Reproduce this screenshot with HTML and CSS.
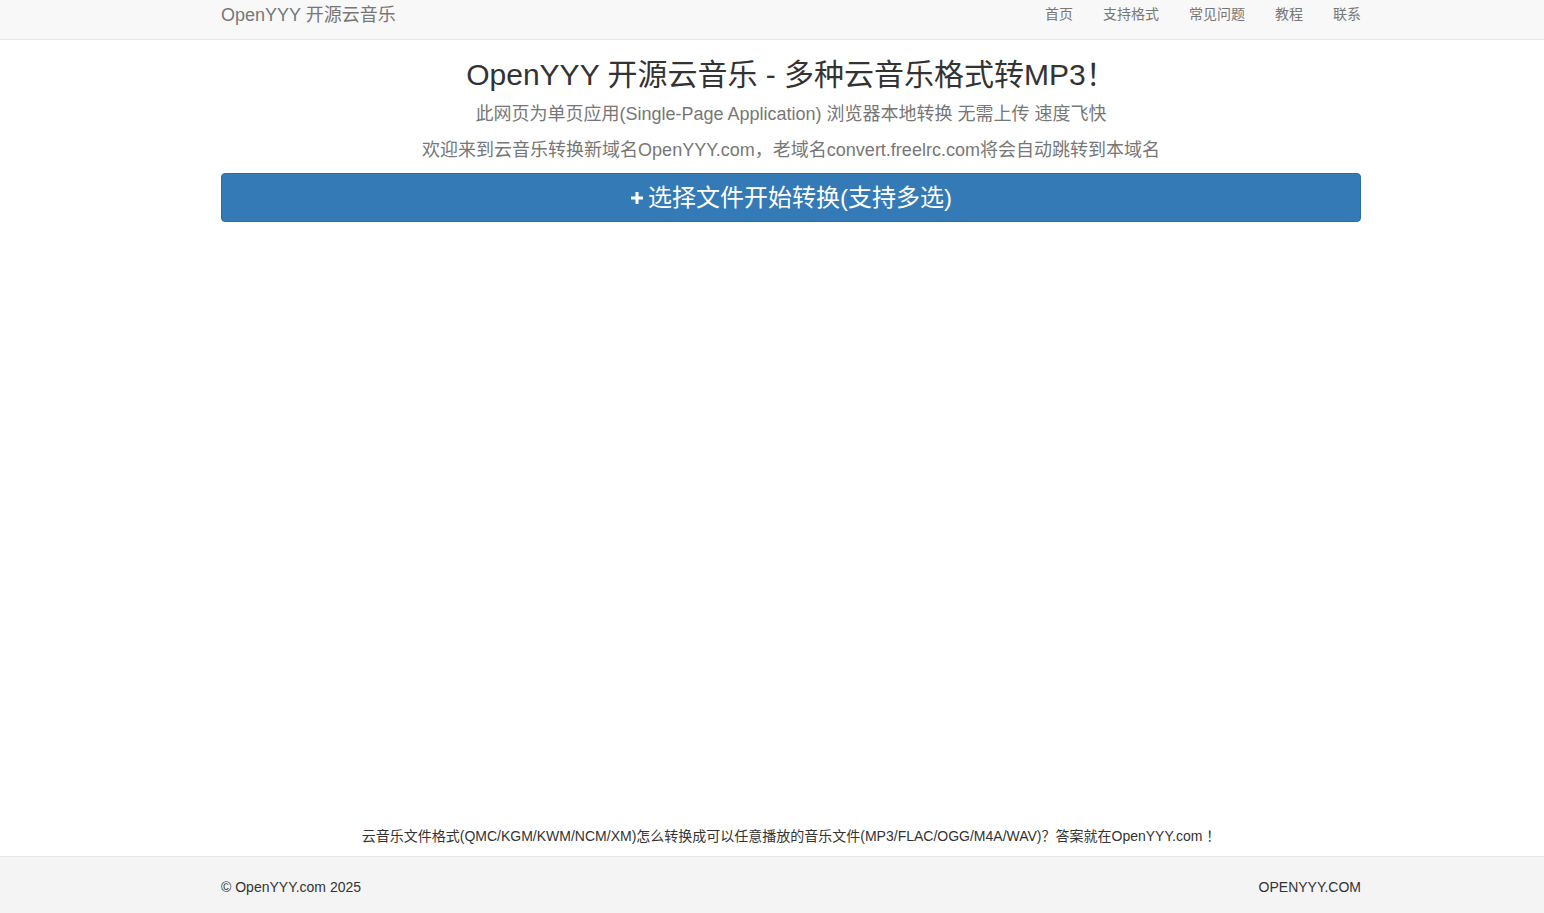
FILE: index.html
```html
<!DOCTYPE html>
<html lang="zh-CN">
<head>
<meta charset="utf-8">
<title>OpenYYY 开源云音乐</title>
<link rel="stylesheet" href="styles.css">
</head>
<body>
<div class="page">
  <header class="navbar">
    <div class="container nav-inner">
      <a class="brand" href="#">OpenYYY 开源云音乐</a>
      <nav class="nav-links">
        <a href="#">首页</a>
        <a href="#">支持格式</a>
        <a href="#">常见问题</a>
        <a href="#">教程</a>
        <a href="#">联系</a>
      </nav>
    </div>
  </header>
  <main class="main">
    <div class="container">
      <h1 class="title">OpenYYY 开源云音乐 - 多种云音乐格式转MP3！</h1>
      <p class="lead">此网页为单页应用(Single-Page Application) 浏览器本地转换 无需上传 速度飞快</p>
      <p class="lead">欢迎来到云音乐转换新域名OpenYYY.com，老域名convert.freelrc.com将会自动跳转到本域名</p>
      <button class="btn-select" type="button"><svg class="plus" viewBox="0 0 14 14" width="14" height="14"><path d="M5.5 1h3v4.5H13v3H8.5V13h-3V8.5H1v-3h4.5z" fill="#fff"/></svg>选择文件开始转换(支持多选)</button>
    </div>
  </main>
  <div class="container note">云音乐文件格式(QMC/KGM/KWM/NCM/XM)怎么转换成可以任意播放的音乐文件(MP3/FLAC/OGG/M4A/WAV)？答案就在OpenYYY.com ！</div>
  <footer class="footer">
    <div class="container footer-inner">
      <span>© OpenYYY.com 2025</span>
      <span>OPENYYY.COM</span>
    </div>
  </footer>
</div>
</body>
</html>
```
FILE: styles.css
```css
* { box-sizing: border-box; }
html, body { margin: 0; padding: 0; }
body {
  font-family: "Liberation Sans", Arial, "Noto Sans CJK SC", sans-serif;
  font-size: 14px;
  color: #333;
  background: #fff;
}
.page {
  min-height: 913px;
  display: flex;
  flex-direction: column;
}
.container {
  width: 1140px;
  margin-left: calc(50% - 551px);
}
.navbar {
  height: 40px;
  background: #f8f8f8;
  border-bottom: 1px solid #e7e7e7;
}
.nav-inner {
  display: flex;
  justify-content: space-between;
  align-items: center;
  height: 25px;
}
.brand {
  font-size: 18px;
  color: #777;
  text-decoration: none;
}
.nav-links {
  display: flex;
  gap: 30px;
  padding-top: 1px;
}
.nav-links a {
  font-size: 14px;
  color: #777;
  text-decoration: none;
}
.main { flex: 1; }
.title {
  margin: 17px 0 0;
  font-size: 30px;
  line-height: 36px;
  font-weight: 400;
  text-align: center;
  color: #333;
}
.lead {
  margin: 0;
  font-size: 18px;
  line-height: 36px;
  color: #777;
  text-align: center;
}
.title + .lead { margin-top: 3px; }
.btn-select {
  display: flex;
  align-items: center;
  justify-content: center;
  gap: 4px;
  width: 100%;
  height: 49px;
  margin-top: 5px;
  border: 1px solid #2e6da4;
  border-radius: 4px;
  background: #337ab7;
  color: #fff;
  font-family: "Liberation Sans", Arial, "Noto Sans CJK SC", sans-serif;
  font-size: 24px;
  padding: 0 0 4px;
  cursor: pointer;
}
.plus { margin-top: 4px; }
.note {
  text-align: center;
  font-size: 14px;
  line-height: 20px;
  color: #333;
  margin-bottom: 10px;
}
.footer {
  background: #f4f4f4;
  border-top: 1px solid #e7e7e7;
  padding: 20px 0 16px;
}
.footer-inner {
  display: flex;
  justify-content: space-between;
  font-size: 14px;
  line-height: 20px;
  color: #333;
}
```
